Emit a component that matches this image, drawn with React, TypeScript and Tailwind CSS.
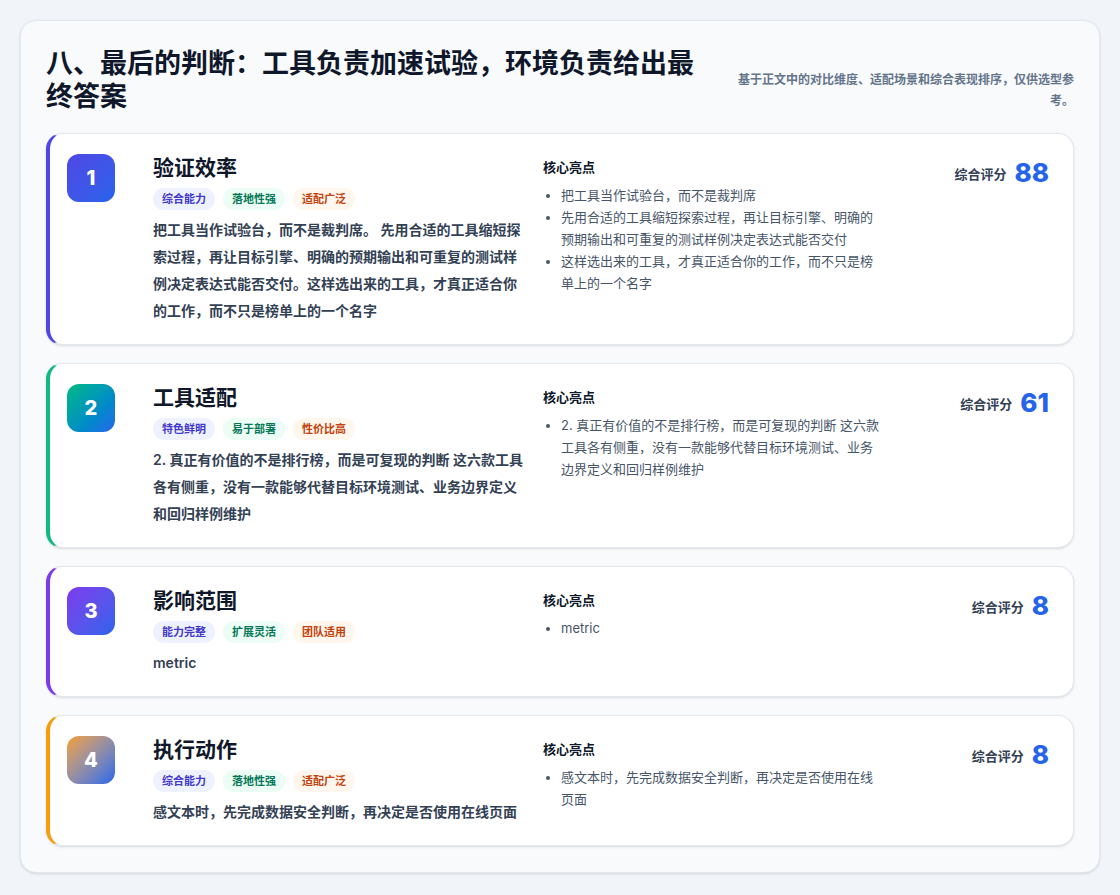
import React from "react";

const items = [
  {
    n: 1,
    title: "验证效率",
    tags: ["综合能力", "落地性强", "适配广泛"],
    desc: "把工具当作试验台，而不是裁判席。 先用合适的工具缩短探索过程，再让目标引擎、明确的预期输出和可重复的测试样例决定表达式能否交付。这样选出来的工具，才真正适合你的工作，而不只是榜单上的一个名字",
    points: ["把工具当作试验台，而不是裁判席", "先用合适的工具缩短探索过程，再让目标引擎、明确的预期输出和可重复的测试样例决定表达式能否交付", "这样选出来的工具，才真正适合你的工作，而不只是榜单上的一个名字"],
    score: 88,
    border: "border-l-[#4f46e5]",
    badge: "bg-gradient-to-br from-[#4f46e5] to-[#2563eb]",
  },
  {
    n: 2,
    title: "工具适配",
    tags: ["特色鲜明", "易于部署", "性价比高"],
    desc: "2. 真正有价值的不是排行榜，而是可复现的判断 这六款工具各有侧重，没有一款能够代替目标环境测试、业务边界定义和回归样例维护",
    points: ["2. 真正有价值的不是排行榜，而是可复现的判断 这六款工具各有侧重，没有一款能够代替目标环境测试、业务边界定义和回归样例维护"],
    score: 61,
    border: "border-l-[#10b981]",
    badge: "bg-gradient-to-br from-[#10b981] to-[#2563eb]",
  },
  {
    n: 3,
    title: "影响范围",
    tags: ["能力完整", "扩展灵活", "团队适用"],
    desc: "metric",
    points: ["metric"],
    score: 8,
    border: "border-l-[#7c3aed]",
    badge: "bg-gradient-to-br from-[#7c3aed] to-[#2563eb]",
  },
  {
    n: 4,
    title: "执行动作",
    tags: ["综合能力", "落地性强", "适配广泛"],
    desc: "感文本时，先完成数据安全判断，再决定是否使用在线页面",
    points: ["感文本时，先完成数据安全判断，再决定是否使用在线页面"],
    score: 8,
    border: "border-l-[#f59e0b]",
    badge: "bg-gradient-to-br from-[#f59e0b] to-[#2563eb]",
  },
];

const tagStyles = [
  "bg-[#eef2ff] text-[#4338ca]",
  "bg-[#ecfdf5] text-[#047857]",
  "bg-[#fff7ed] text-[#c2410c]",
];

export default function App() {
  return (
    <div
      className="min-h-[895px] bg-[#f1f5f9] px-5 pt-5 pb-[22px]"
      style={{ fontFamily: "Inter, 'Noto Sans CJK SC', sans-serif" }}
    >
      <div className="rounded-2xl border border-[#e2e8f0] bg-[#f8fafc] px-[25px] pt-[26px] pb-[26px] shadow-sm">
        {/* Header */}
        <div className="mb-[20px] flex items-start justify-between">
          <h1 className="w-[660px] text-[27px] font-bold leading-[33px] text-[#0f172a]">
            八、最后的判断：工具负责加速试验，环境负责给出最终答案
          </h1>
          <p className="mt-[22px] w-[340px] text-right text-[12px] font-semibold leading-[21px] text-[#64748b]">
            基于正文中的对比维度、适配场景和综合表现排序，仅供选型参考。
          </p>
        </div>

        <div className="flex flex-col gap-[18px]">
          {items.map((it) => (
            <div
              key={it.n}
              className={`flex rounded-2xl border border-[#e2e8f0] border-l-4 ${it.border} bg-white pl-[17px] pr-6 pt-5 pb-[20px] shadow-sm`}
            >
              <div
                className={`flex h-12 w-12 shrink-0 items-center justify-center rounded-xl ${it.badge} text-[20px] font-extrabold text-white`}
              >
                {it.n}
              </div>
              <div className="ml-[38px] w-[372px] shrink-0">
                <h2 className="text-[21px] font-bold leading-7 text-[#0f172a]">{it.title}</h2>
                <div className="mt-[6px] flex gap-2">
                  {it.tags.map((t, i) => (
                    <span
                      key={t}
                      className={`rounded-full px-[9px] py-[3px] text-[11px] font-semibold leading-4 ${tagStyles[i]}`}
                    >
                      {t}
                    </span>
                  ))}
                </div>
                <p className="mt-[6px] text-[14px] font-semibold leading-[27px] text-[#334155]">{it.desc}</p>
              </div>
              <div className="ml-[18px] w-[338px] shrink-0 pt-[3px]">
                <h3 className="text-[13px] font-bold leading-5 text-[#0f172a]">核心亮点</h3>
                <ul className="mt-[7px] list-disc pl-[18px] text-[13px] leading-[22px] text-[#475569]">
                  {it.points.map((p) => (
                    <li key={p}>{p}</li>
                  ))}
                </ul>
              </div>
              <div className="flex flex-1 items-start justify-end gap-2 pt-[1px]">
                <span className="mt-[10px] text-[13px] font-semibold text-[#334155]">综合评分</span>
                <span className="text-[26px] font-extrabold leading-9 text-[#2563eb]">{it.score}</span>
              </div>
            </div>
          ))}
        </div>
      </div>
    </div>
  );
}
